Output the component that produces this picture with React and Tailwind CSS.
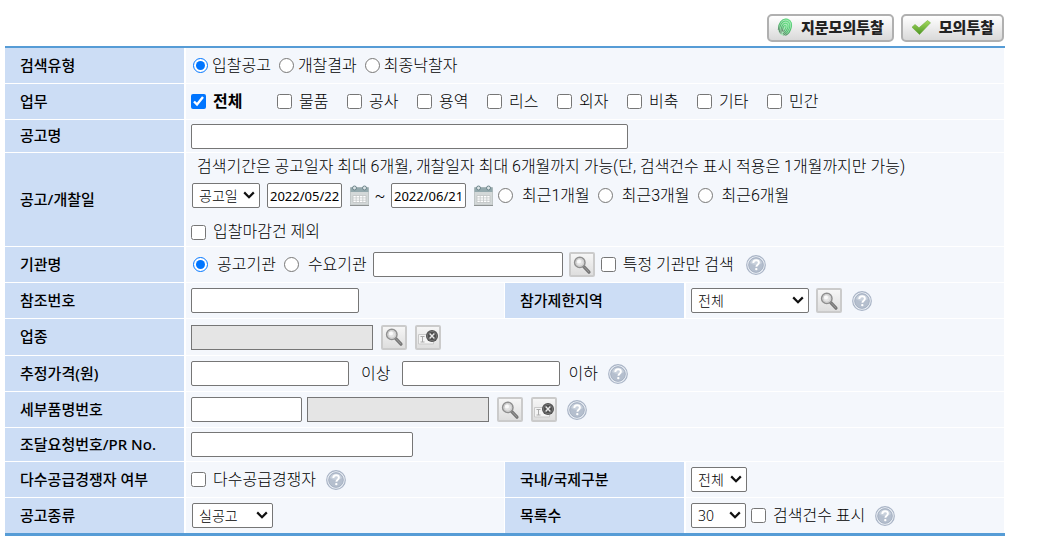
import React from 'react';

const PERIODS = ['최근1개월', '최근3개월', '최근6개월'];
const TASKS = ['물품', '공사', '용역', '리스', '외자', '비축', '기타', '민간'];

function Row({ children, tall }) {
  return <div className={tall ? 'flex min-h-9 gap-px' : 'flex min-h-[35px] gap-px'}>{children}</div>;
}

function Field({ label, htmlFor, children, stacked }) {
  const Tag = htmlFor ? 'label' : 'span';
  return (
    <div className="flex min-w-0 flex-1 gap-[2px]">
      <div className="flex w-[179px] shrink-0 items-center bg-[#ccddf5] pb-0.5 pl-[15px] font-['Noto_Sans','Noto_Sans_CJK_KR',sans-serif] text-[15px] leading-5 font-medium">
        <Tag htmlFor={htmlFor}>{label}</Tag>
      </div>
      <div
        className={
          stacked
            ? 'flex min-w-0 flex-1 flex-col bg-[#f4f7fc] py-1 pl-[5px]'
            : 'flex min-w-0 flex-1 items-center bg-[#f4f7fc] pl-[5px]'
        }
      >
        {children}
      </div>
    </div>
  );
}

function Radio({ name, label, wide, defaultChecked }) {
  return (
    <label className={wide ? 'flex items-center gap-[9px]' : 'flex items-center gap-1'}>
      <input type="radio" name={name} defaultChecked={defaultChecked} className="size-[15px] shrink-0 accent-[#0075ff]" />
      <span>{label}</span>
    </label>
  );
}

function Check({ label, bold, defaultChecked }) {
  return (
    <label className="flex items-center gap-[7px]">
      <input type="checkbox" defaultChecked={defaultChecked} className="size-[15px] shrink-0 accent-[#0075ff]" />
      <span className={bold ? 'font-bold' : ''}>{label}</span>
    </label>
  );
}

function TextBox({ className, ...rest }) {
  return (
    <input
      type="text"
      className={`h-[25px] min-w-0 rounded-[2px] border border-[#767676] bg-white px-0.5 font-['Noto_Sans','Noto_Sans_CJK_KR',sans-serif] text-[13px] font-normal ${className}`}
      {...rest}
    />
  );
}

function LockedBox({ label }) {
  return (
    <input type="text" readOnly aria-label={label} className="h-[25px] w-[182px] min-w-0 border border-[#767676] bg-[#e5e5e5] px-0.5 text-[13px]" />
  );
}

function Select({ id, label, options, className }) {
  return (
    <div className={`relative h-[25px] ${className}`}>
      <select
        id={id}
        aria-label={label}
        className="block h-full w-full appearance-none rounded-[2px] border border-[#767676] bg-white pl-1.5 font-['Noto_Sans','Noto_Sans_CJK_KR',sans-serif] text-sm leading-5"
      >
        {options.map((o) => (
          <option key={o}>{o}</option>
        ))}
      </select>
      <svg viewBox="0 0 12 8" className="pointer-events-none absolute top-2 right-[5px] h-2 w-3" fill="none" stroke="#111" strokeWidth="2.2">
        <path d="M1.2 1.4 6 6.2l4.8-4.8" />
      </svg>
    </div>
  );
}

const toolButton =
  'flex h-[25px] w-[26px] shrink-0 items-center justify-center rounded-[2px] border-2 border-[#cbcbcb] bg-linear-to-b from-[#f6f6f6] to-[#dedede]';

function SearchButton({ label }) {
  return (
    <button type="button" aria-label={label} className={toolButton}>
      <svg viewBox="0 0 20 20" className="size-5" fill="none">
        <path d="m11.6 11.4 5.4 5.8" stroke="#777" strokeWidth="3.2" strokeLinecap="round" />
        <path d="m12.6 12.2 4 4.4" stroke="#9a9a9a" strokeWidth="1" strokeLinecap="round" />
        <circle cx="7.8" cy="7.4" r="5.2" fill="#e3e3e3" stroke="#8f8f8f" strokeWidth="1.5" />
        <circle cx="7.8" cy="7.4" r="3.8" stroke="#c6c6c6" strokeWidth="0.8" />
        <circle cx="7" cy="6.4" r="2" fill="#fafafa" />
      </svg>
    </button>
  );
}

function ClearButton({ label }) {
  return (
    <button type="button" aria-label={label} className={toolButton}>
      <svg viewBox="0 0 22 20" className="h-5 w-[22px]" fill="none">
        <path d="M1.5 7.5h15v9.5h-15z" fill="#f4f4f4" stroke="#c9c9c9" />
        <path d="M3.5 9.5h4M3.5 15h4M5.5 9.5V15" stroke="#aaa" />
        <circle cx="15" cy="9" r="6" fill="#505050" />
        <circle cx="15" cy="9" r="4.6" stroke="#888" strokeWidth="0.6" />
        <path d="m12.6 6.6 4.8 4.8m0-4.8-4.8 4.8" stroke="#e8e8e8" strokeWidth="1.4" />
      </svg>
    </button>
  );
}

function HelpButton() {
  return (
    <button type="button" aria-label="도움말" className="size-5 shrink-0">
      <svg viewBox="0 0 20 20" className="size-5" fill="none">
        <circle cx="10" cy="10" r="9.3" fill="#eef2f7" stroke="#a9b4c6" strokeWidth="1.2" />
        <circle cx="10" cy="10" r="7.4" fill="#b5bfce" stroke="#98a5b9" strokeWidth="0.7" />
        <path d="M4 8a6.4 6.4 0 0 1 12 0c-3 2.4-8 2.6-12 0Z" fill="#c9d1dc" />
        <path d="M7.3 8.1c0-1.8 1.1-2.8 2.8-2.8s2.8 1 2.8 2.4c0 1.9-2.5 2-2.5 4" stroke="#fff" strokeWidth="1.9" />
        <circle cx="10.3" cy="14.1" r="1.2" fill="#fff" />
      </svg>
    </button>
  );
}

function CalendarButton({ label }) {
  return (
    <button type="button" aria-label={label} className="h-[22px] w-[19px] shrink-0">
      <svg viewBox="0 0 19 22" className="h-[22px] w-[19px]" fill="none">
        <path d="M.5 2.500h18v17.500H.5z" fill="#d3d8d8" stroke="#c0c6c6" />
        <path d="M.5 2.500h18V7H.5z" fill="#93a8ac" />
        <path d="M0 20.5h19" stroke="#8f9393" />
        <circle cx="4.500" cy="3" r="2" fill="#dbe3e5" stroke="#6d858b" />
        <circle cx="14.500" cy="3" r="2" fill="#dbe3e5" stroke="#6d858b" />
        <path d="M3 10.5h13v7H3z" fill="#fff" stroke="#bfc3c3" strokeWidth="0.8" />
        <path d="M3 12.9h13M3 15.2h13M6.2 10.5v7M9.5 10.5v7M12.8 10.5v7" stroke="#c3c7c7" strokeWidth="0.8" />
      </svg>
    </button>
  );
}

function FingerprintIcon() {
  return (
    <svg viewBox="0 0 16 20" className="h-5 w-4" fill="none">
      <defs>
        <linearGradient id="finger" x1="0.7" y1="0" x2="0.3" y2="1">
          <stop offset="0" stopColor="#62dc80" />
          <stop offset="0.6" stopColor="#4fb36c" />
          <stop offset="1" stopColor="#6b7a6f" />
        </linearGradient>
      </defs>
      <ellipse cx="8" cy="10" rx="6.6" ry="8.8" transform="rotate(20 8 10)" fill="#a9e8b9" />
      <g stroke="url(#finger)" strokeWidth="1" strokeLinecap="round" transform="rotate(12 8 10)">
        <path d="M2 14C.6 8 3 2 8.6 1.9 13 2 15 6 14 11c-.4 3-1.6 5.5-3.6 7" />
        <path d="M3.6 16C2 10 3.5 4.2 8.3 4c3.6 0 4.8 3.4 4.1 7-.5 3-1.9 5.4-3.9 7" />
        <path d="M5.3 17C3.8 11.5 4.8 6.3 8.2 6.2c2.5 0 3.1 2.4 2.5 5-.4 2.2-1.4 4.2-3 5.7" />
        <path d="M6.5 14.5c-.7-3-.2-6 1.5-6 1.8.2 1 3.8-.4 6" />
      </g>
    </svg>
  );
}

function CheckIcon() {
  return (
    <svg viewBox="0 0 20 18" className="h-[18px] w-5" fill="none">
      <defs>
        <linearGradient id="tick" x1="0" y1="0" x2="0" y2="1">
          <stop offset="0" stopColor="#a5dc5c" />
          <stop offset="1" stopColor="#4d9426" />
        </linearGradient>
      </defs>
      <path d="M1 9.2 4 6.5l4 3.300 8.500-7.300 3 2.300L8.500 16.500Z" fill="url(#tick)" stroke="#6dab3c" strokeWidth="0.6" />
    </svg>
  );
}

function ActionButton({ icon, children }) {
  return (
    <button
      type="button"
      className="flex h-7 items-center gap-2 rounded-[5px] border-2 border-[#b0b0b0] bg-linear-to-b from-white to-[#d9d9d9] px-2 pb-0.5 font-['Noto_Sans_CJK_KR',sans-serif] text-[15px] leading-5 font-black text-[#222]"
    >
      {icon}
      <span>{children}</span>
    </button>
  );
}

export default function App() {
  return (
    <main className="pt-3.5 pr-[37px] pb-5 pl-[5px] font-['Roboto','Noto_Sans_CJK_KR',sans-serif] text-base leading-5 font-light whitespace-nowrap text-black">
      <div className="mb-1 flex justify-end gap-[7px] pr-px">
        <ActionButton icon={<FingerprintIcon />}>지문모의투찰</ActionButton>
        <ActionButton icon={<CheckIcon />}>모의투찰</ActionButton>
      </div>

      <form className="flex flex-col gap-px border-t-2 border-b-3 border-[#569cd6] pr-px">
        <Row>
          <Field label="검색유형">
            <div className="flex gap-2 pl-0.5">
              <Radio name="kind" label="입찰공고" defaultChecked />
              <Radio name="kind" label="개찰결과" />
              <Radio name="kind" label="최종낙찰자" />
            </div>
          </Field>
        </Row>

        <Row>
          <Field label="업무">
            <div className="w-[86px]">
              <Check label="전체" bold defaultChecked />
            </div>
            {TASKS.map((t) => (
              <div key={t} className="w-[70px]">
                <Check label={t} />
              </div>
            ))}
          </Field>
        </Row>

        <div className="flex min-h-8">
          <Field label="공고명" htmlFor="title">
            <TextBox id="title" className="w-[437px]" />
          </Field>
        </div>

        <Row>
          <Field label="공고/개찰일" stacked>
            <p className="pl-1.5">
              검색기간은 공고일자 최대 6개월, 개찰일자 최대 6개월까지 가능(단, 검색건수 표시 적용은 1개월까지만 가능)
            </p>
            <div className="mt-1.5 flex items-center pl-px">
              <Select label="일자 기준" options={['공고일', '개찰일']} className="w-[68px]" />
              <div className="ml-[7px] flex items-center gap-2">
                <TextBox aria-label="시작일" defaultValue="2022/05/22" className="w-[75px]" />
                <CalendarButton label="시작일 선택" />
              </div>
              <span className="w-[22px] text-center">~</span>
              <div className="flex items-center gap-2">
                <TextBox aria-label="종료일" defaultValue="2022/06/21" className="w-[75px]" />
                <CalendarButton label="종료일 선택" />
              </div>
              <div className="ml-[5px] flex gap-2">
                {PERIODS.map((p) => (
                  <Radio key={p} name="period" label={p} wide />
                ))}
              </div>
            </div>
            <div className="mt-3.5 flex">
              <Check label="입찰마감건 제외" />
            </div>
          </Field>
        </Row>

        <Row>
          <Field label="기관명">
            <div className="flex gap-2 pl-0.5">
              <Radio name="org" label="공고기관" wide defaultChecked />
              <Radio name="org" label="수요기관" wide />
            </div>
            <div className="ml-1.5 flex items-center gap-1.5">
              <TextBox aria-label="기관명" className="w-[190px]" />
              <SearchButton label="기관 검색" />
              <Check label="특정 기관만 검색" />
            </div>
            <div className="ml-3 flex">
              <HelpButton />
            </div>
          </Field>
        </Row>

        <Row>
          <Field label="참조번호" htmlFor="ref">
            <TextBox id="ref" className="w-[168px]" />
          </Field>
          <Field label="참가제한지역" htmlFor="region">
            <Select id="region" options={['전체']} className="mr-[7px] w-[118px]" />
            <SearchButton label="지역 검색" />
            <div className="ml-2.5 flex">
              <HelpButton />
            </div>
          </Field>
        </Row>

        <Row tall>
          <Field label="업종">
            <div className="flex gap-2">
              <LockedBox label="업종" />
              <SearchButton label="업종 검색" />
              <ClearButton label="업종 지우기" />
            </div>
          </Field>
        </Row>

        <Row>
          <Field label="추정가격(원)">
            <TextBox aria-label="최저 추정가격" className="w-[158px]" />
            <span className="mr-3 ml-3">이상</span>
            <TextBox aria-label="최고 추정가격" className="w-[158px]" />
            <span className="mr-2.5 ml-2">이하</span>
            <HelpButton />
          </Field>
        </Row>

        <Row>
          <Field label="세부품명번호" htmlFor="item">
            <TextBox id="item" className="mr-[5px] w-[111px]" />
            <div className="flex gap-2">
              <LockedBox label="세부품명" />
              <SearchButton label="품명 검색" />
              <ClearButton label="품명 지우기" />
            </div>
            <div className="ml-2.5 flex">
              <HelpButton />
            </div>
          </Field>
        </Row>

        <div className="flex min-h-[33px]">
          <Field label="조달요청번호/PR No." htmlFor="pr">
            <TextBox id="pr" className="w-[222px]" />
          </Field>
        </div>

        <Row>
          <Field label="다수공급경쟁자 여부">
            <Check label="다수공급경쟁자" />
            <div className="ml-2.5 flex">
              <HelpButton />
            </div>
          </Field>
          <Field label="국내/국제구분" htmlFor="scope">
            <Select id="scope" options={['전체', '국내', '국제']} className="w-14" />
          </Field>
        </Row>

        <Row>
          <Field label="공고종류" htmlFor="type">
            <Select id="type" options={['실공고']} className="ml-px w-[81px]" />
          </Field>
          <Field label="목록수" htmlFor="count">
            <Select id="count" options={['30', '50', '100']} className="mr-[5px] w-[55px]" />
            <Check label="검색건수 표시" />
            <div className="ml-2.5 flex">
              <HelpButton />
            </div>
          </Field>
        </Row>
      </form>
    </main>
  );
}
